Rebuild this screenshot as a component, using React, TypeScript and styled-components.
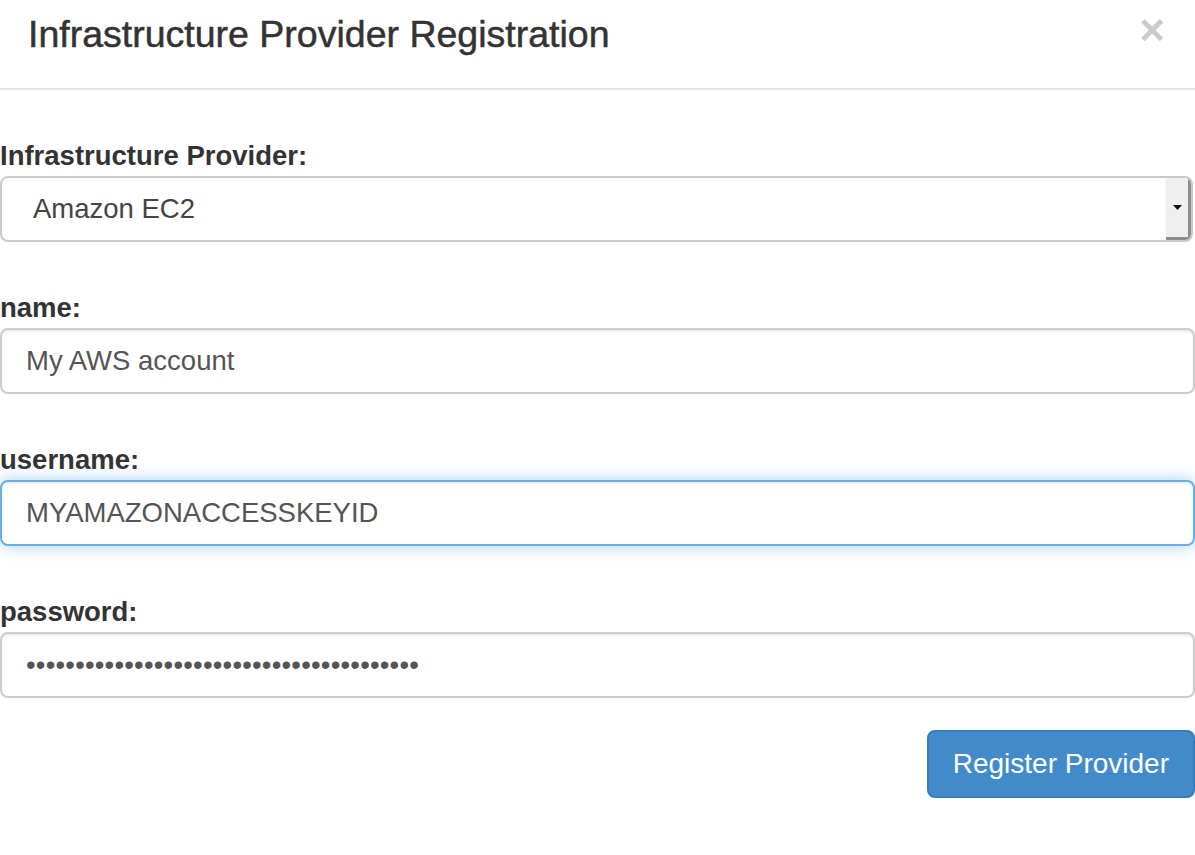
import styled, { createGlobalStyle } from 'styled-components'

const GlobalStyle = createGlobalStyle`
  html, body {
    margin: 0;
    padding: 0;
    background: #ffffff;
    overflow: hidden;
  }
  body {
    font-family: "Liberation Sans", Arial, Helvetica, sans-serif;
    color: #333333;
  }
  * {
    box-sizing: border-box;
  }
`

const Modal = styled.div`
  width: 1195px;
  height: 855px;
  background: #ffffff;
`

const Header = styled.div`
  display: flex;
  align-items: flex-start;
  justify-content: space-between;
  height: 90px;
  padding: 14px 30px 0 28px;
  border-bottom: 2px solid #e5e5e5;
`

const Title = styled.h4`
  margin: 0;
  font-size: 37.5px;
  font-weight: 500;
  line-height: 41px;
  color: #333333;
  -webkit-text-stroke: 0.5px #333333;
`

const Close = styled.button`
  margin: 1px 0 0;
  padding: 0;
  border: none;
  background: none;
  font-family: "Liberation Sans", Arial, sans-serif;
  font-size: 44px;
  font-weight: 700;
  line-height: 30px;
  color: #000000;
  opacity: 0.2;
  cursor: pointer;
`

const Body = styled.form`
  display: flex;
  flex-direction: column;
  padding-top: 51px;
`

const Fields = styled.div`
  display: flex;
  flex-direction: column;
  gap: 51px;
`

const Group = styled.div`
  display: flex;
  flex-direction: column;
`

const Label = styled.label`
  display: block;
  margin: 0 0 5px;
  font-size: 27.5px;
  font-weight: 700;
  line-height: 30px;
  color: #333333;
`

const Input = styled.input<{ $focused?: boolean }>`
  display: block;
  width: 100%;
  height: 66px;
  padding: 0 24px;
  border: 2px solid ${(p) => (p.$focused ? '#66afe9' : '#cccccc')};
  border-radius: 8px;
  background: #ffffff;
  font-family: "Liberation Sans", Arial, sans-serif;
  font-size: 27.5px;
  color: #555555;
  outline: none;
  box-shadow: ${(p) =>
    p.$focused
      ? 'inset 0 2px 2px rgba(0,0,0,0.075), 0 0 16px rgba(102,175,233,0.6)'
      : 'inset 0 2px 2px rgba(0,0,0,0.075)'};
`

const PasswordInput = styled(Input)`
  letter-spacing: 0.2px;
`

const SelectBox = styled.div`
  display: flex;
  align-items: stretch;
  width: 1193px;
  height: 66px;
  border: 2px solid #c9c9c9;
  border-radius: 8px;
  overflow: hidden;
  background: #ffffff;
`

const SelectValue = styled.span`
  flex: 1;
  display: flex;
  align-items: center;
  padding-left: 31px;
  font-size: 27.5px;
  color: #444444;
`

const ArrowTab = styled.span`
  display: flex;
  align-items: center;
  justify-content: center;
  width: 26px;
  background: #efefef;
  border-left: 1px solid #f7f7f7;
  box-shadow: inset -3px -3px 0 #8d8d8d;
  padding: 0 3px 3px 0;
`

const Actions = styled.div`
  display: flex;
  justify-content: flex-end;
  margin-top: 32px;
`

const PrimaryButton = styled.button`
  display: flex;
  align-items: center;
  justify-content: center;
  height: 68px;
  padding: 0 24px;
  border: 2px solid #357ebd;
  border-radius: 8px;
  background: #428bca;
  font-family: "Liberation Sans", Arial, sans-serif;
  font-size: 28px;
  color: #ffffff;
  cursor: pointer;
`

export default function App() {
  return (
    <>
      <GlobalStyle />
      <Modal>
        <Header>
          <Title>Infrastructure Provider Registration</Title>
          <Close type="button" aria-label="Close">
            ×
          </Close>
        </Header>
        <Body onSubmit={(e) => e.preventDefault()}>
          <Fields>
            <Group>
              <Label>Infrastructure Provider:</Label>
              <SelectBox role="combobox">
                <SelectValue>Amazon EC2</SelectValue>
                <ArrowTab>
                  <svg width="9" height="5" viewBox="0 0 9 5">
                    <path d="M0 0h9L4.5 5z" fill="#111" />
                  </svg>
                </ArrowTab>
              </SelectBox>
            </Group>
            <Group>
              <Label htmlFor="name">name:</Label>
              <Input id="name" defaultValue="My AWS account" />
            </Group>
            <Group>
              <Label htmlFor="username">username:</Label>
              <Input id="username" $focused defaultValue="MYAMAZONACCESSKEYID" />
            </Group>
            <Group>
              <Label htmlFor="password">password:</Label>
              <PasswordInput
                id="password"
                type="password"
                defaultValue={'x'.repeat(40)}
              />
            </Group>
          </Fields>
          <Actions>
            <PrimaryButton type="submit">Register Provider</PrimaryButton>
          </Actions>
        </Body>
      </Modal>
    </>
  )
}
